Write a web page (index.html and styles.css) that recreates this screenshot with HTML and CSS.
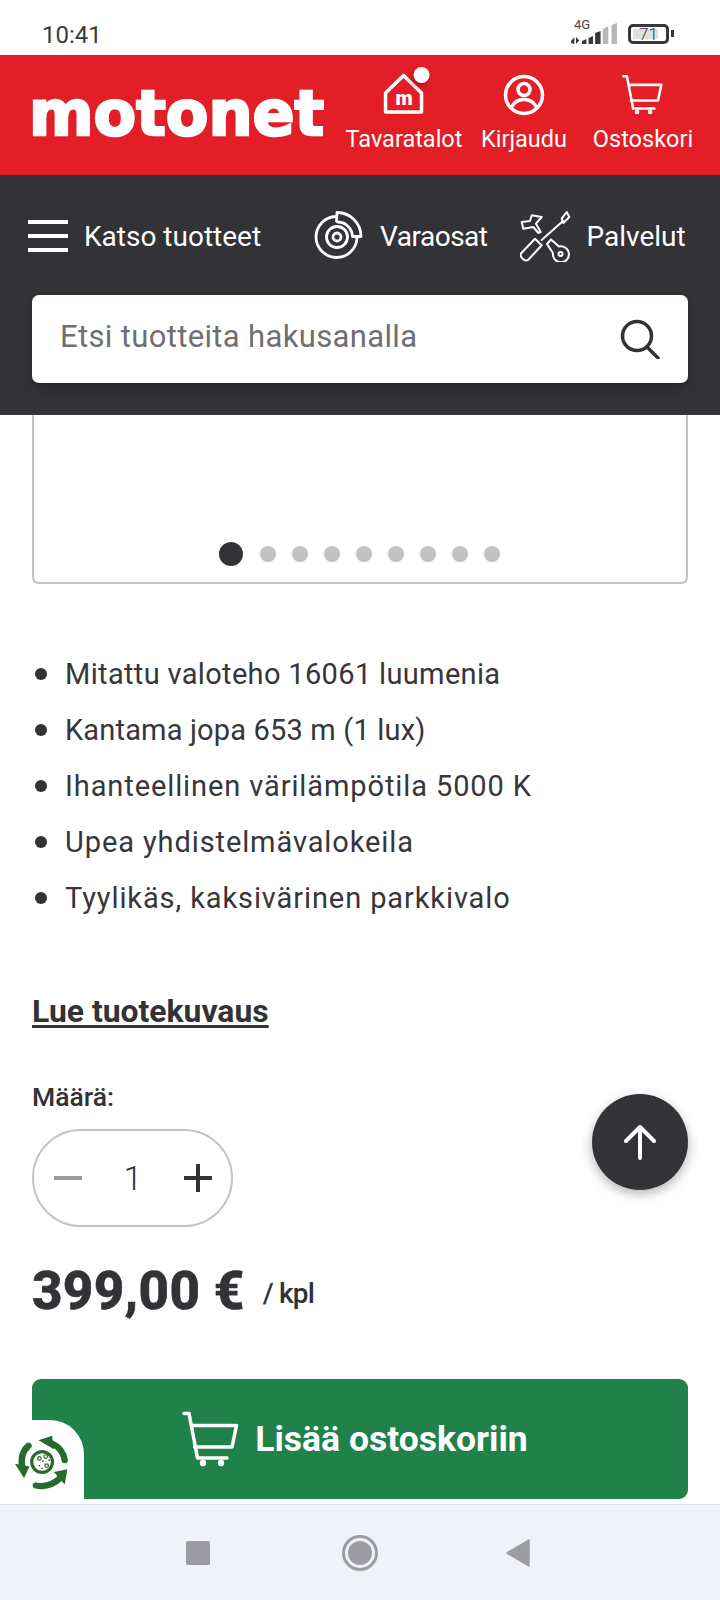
FILE: index.html
```html
<!DOCTYPE html>
<html lang="fi">
<head>
<meta charset="utf-8">
<title>Motonet</title>
<link rel="stylesheet" href="styles.css">
</head>
<body>
<div class="page">
  <div class="status">
    <span class="clock">10:41</span>
    <div class="status-right">
      <div class="signal">
        <span class="net">4G</span>
        <svg class="bars" width="47" height="22" viewBox="0 0 43 22" preserveAspectRatio="none"><path class="b-d" d="M1 18l3-4v7l-3-1zM5.500 14l3 3.500-3 3.500zM11 18l4-2v5h-4zM17 15l4-2v8h-4zM23 10l5-2v13h-5z"/><path class="b-l" d="M30 6l5-3v18h-5zM38 2l5-2v21h-5z"/></svg>
      </div>
      <div class="battery"><span class="batt-fill"></span><span class="batt-num">71</span></div>
      <span class="batt-tip"></span>
    </div>
  </div>

  <header class="top">
    <div class="logo">motonet</div>
    <nav class="top-links">
      <a class="top-link l-store">
        <span class="top-ico">
          <svg width="44" height="44" viewBox="0 0 44 44"><path class="ws" d="M4 20 22 2.500 40 20v19H4z"/></svg>
          <span class="m">m</span>
          <span class="dot"></span>
        </span>
        <span>Tavaratalot</span>
      </a>
      <a class="top-link l-login">
        <span class="top-ico">
          <svg width="44" height="44" viewBox="0 0 44 44"><circle class="ws" cx="22" cy="22" r="18.500"/><circle class="ws" cx="22" cy="16.500" r="6"/><path class="ws" d="M9.500 34c3-5.500 7.500-7.500 12.500-7.500s9.500 2 12.500 7.500"/></svg>
        </span>
        <span>Kirjaudu</span>
      </a>
      <a class="top-link l-cart">
        <span class="top-ico">
          <svg class="cart-small" width="42" height="42" viewBox="0 0 58 57"><use href="#cart"/></svg>
        </span>
        <span>Ostoskori</span>
      </a>
    </nav>
  </header>

  <section class="dark">
    <div class="menu-row">
      <span class="burger"><i></i><i></i><i></i></span>
      <span class="menu-text t1">Katso tuotteet</span>
      <svg class="brake" width="50" height="50" viewBox="0 0 50 50">
        <path class="ws2" d="M23 5.500A20.500 20.500 0 1 0 44 27"/>
        <path class="ws2" d="M24 1.500A24 24 0 0 1 48 25.500H39.500A15 15 0 0 0 25 11l-1.500-1z"/>
        <circle class="ws2" cx="24" cy="26" r="10.500"/>
        <circle class="ws2" cx="24" cy="26" r="4"/>
      </svg>
      <span class="menu-text t2">Varaosat</span>
      <svg class="tools" width="54" height="52" viewBox="0 0 54 52">
        <path class="ws3" d="M1.700 12 10 11l1.700-5.700L21.700 7 16 13.700 20.700 22l-2.400 1-5-6-10 1.700z"/>
        <path class="ws3" d="M41.700 8.700 46.700 2l2.600 5-6 6z"/>
        <path class="ws3" d="M43 11 21.700 30"/>
        <path class="ws3" d="M15 28.700l6.700 6.600L8.300 49.700c-2 1.500-3.600 1-5.300-.7s-3.300-3-2.300-5.300z"/>
        <path class="ws3" d="M31 29.500l8 7a8 8 0 1 1-6 6.500l-6-9z"/>
        <circle class="ws3" cx="40.500" cy="44" r="2"/>
      </svg>
      <span class="menu-text t3">Palvelut</span>
      <span class="menu-cut"></span>
    </div>
    <div class="search">
      <span class="search-text">Etsi tuotteita hakusanalla</span>
      <svg width="40" height="40" viewBox="0 0 40 40"><circle class="ds" cx="17" cy="17" r="14.500"/><path class="ds" d="M27 28l11 11"/></svg>
    </div>
  </section>

  <main class="main">
    <div class="gallery">
      <div class="dots">
        <span class="dot-on"></span>
        <span class="d"></span><span class="d"></span><span class="d"></span><span class="d"></span>
        <span class="d"></span><span class="d"></span><span class="d"></span><span class="d"></span>
      </div>
    </div>
    <ul class="features">
      <li class="f1">Mitattu valoteho 16061 luumenia</li>
      <li class="f2">Kantama jopa 653 m (1 lux)</li>
      <li class="f3">Ihanteellinen värilämpötila 5000 K</li>
      <li class="f3">Upea yhdistelmävalokeila</li>
      <li class="f3">Tyylikäs, kaksivärinen parkkivalo</li>
    </ul>
    <a class="more">Lue tuotekuvaus</a>
    <div class="qty-label">Määrä:</div>
    <div class="stepper">
      <span class="minus"></span>
      <span class="qty">1</span>
      <span class="plus"></span>
    </div>
    <div class="price-row">
      <span class="price">399,00 €</span>
      <span class="unit">/ kpl</span>
    </div>
    <button class="buy">
      <svg class="buy-ico" width="58" height="57" viewBox="0 0 58 57"><use href="#cart"/></svg>
      <span>Lisää ostoskoriin</span>
    </button>
  </main>

  <a class="fab">
    <svg width="36" height="36" viewBox="0 0 36 36"><path class="ws arrow" d="M18 34V3M4 17 18 3l14 14"/></svg>
  </a>

  <div class="eco">
    <svg width="58" height="56" viewBox="0 0 64 62">
      <circle class="eco-ring" cx="31" cy="31" r="11.500"/>
      <circle class="eco-c" cx="28" cy="27" r="2"/><circle class="eco-c" cx="35" cy="25" r="2"/><circle class="eco-c" cx="36" cy="35" r="2"/>
      <circle class="eco-f" cx="28" cy="35" r="1"/><circle class="eco-f" cx="32" cy="30" r="1"/><circle class="eco-f" cx="39" cy="29" r="1"/><circle class="eco-f" cx="31" cy="38" r="1"/>
      <path class="eco-a" d="M56 29C55 21 50 14 41 10"/>
      <path class="eco-h" d="M27 7l15-5 2 15z"/>
      <path class="eco-a" d="M16 13C9 19 7 26 9 37"/>
      <path class="eco-h" d="M1 33l16 3-6 13z"/>
      <path class="eco-a" d="M24 57c10 2 20-1 28-9"/>
      <path class="eco-h" d="M44 42l15-3-3 17z"/>
    </svg>
  </div>

  <div class="sysnav">
    <span class="sys-square"></span>
    <span class="sys-circle"><span></span></span>
    <svg width="24" height="28" viewBox="0 0 24 28"><path class="tri" d="M23 1v26L1 14z"/></svg>
  </div>
</div>

<svg class="defs" width="0" height="0">
  <symbol id="cart" viewBox="0 0 58 57">
    <path class="cart-s" d="M2 2.500h5l8.500 44.500H45M10 14.500h44.500L50 36H12.500"/>
    <circle class="cart-w" cx="21" cy="52" r="3.200"/>
    <circle class="cart-w" cx="39" cy="52" r="3.200"/>
  </symbol>
</svg>
</body>
</html>
```

FILE: styles.css
```css
* { box-sizing: border-box; }
html, body { margin: 0; padding: 0; background: #fff; }
body { font-family: Roboto, "Liberation Sans", sans-serif; color: #323237; }
.page { position: relative; width: 720px; height: 1600px; overflow: hidden; display: flex; flex-direction: column; }
.defs { position: absolute; }

.status { height: 55px; display: flex; align-items: center; justify-content: space-between; padding: 14px 46px 0 42px; background: #fff; }
.clock { font-size: 24px; color: #3a3a3c; }
.status-right { display: flex; align-items: center; margin-top: -2px; }
.signal { position: relative; width: 47px; height: 22px; margin-right: 11px; }
.net { position: absolute; left: 4px; top: -5px; font-size: 13px; line-height: 14px; color: #444; }
.bars { position: absolute; left: 0; top: 0; }
.b-d { fill: #38383a; }
.b-l { fill: #b8b8ba; }
.battery { position: relative; width: 41px; height: 20px; border: 3px solid #38383a; border-radius: 5px; display: flex; align-items: center; justify-content: center; }
.batt-fill { position: absolute; left: 2px; top: 2px; bottom: 2px; width: 25px; background: #e0e0e0; }
.batt-num { position: relative; font-size: 17px; font-weight: 300; color: #333; }
.batt-tip { width: 3px; height: 7px; background: #38383a; margin-left: 2px; }

.top { height: 120px; background: #e31e26; display: flex; color: #fff; position: relative; }
.logo { font-family: "DejaVu Sans", sans-serif; font-weight: 700; font-size: 62px; letter-spacing: 0; line-height: 60px; margin: 29px 0 0 29px; -webkit-text-stroke: 2.500px #fff; }
.top-links { position: absolute; inset: 0; }
.top-link { position: absolute; top: 18px; display: flex; flex-direction: column; align-items: center; font-size: 23.500px; line-height: 28px; white-space: nowrap; transform: translateX(-50%); }
.l-store { left: 404px; }
.l-login { left: 524px; }
.l-cart { left: 643px; }
.top-ico { position: relative; width: 44px; height: 44px; margin-bottom: 8px; display: flex; justify-content: center; }
.top-ico svg { display: block; }
.cart-small { margin-top: 1px; }
.ws { fill: none; stroke: #fff; stroke-width: 3.500px; stroke-linejoin: round; stroke-linecap: round; }
.arrow { stroke-width: 4px; }
.m { position: absolute; left: 0; right: 0; top: 15px; text-align: center; font-size: 20px; font-weight: 900; line-height: 20px; }
.dot { position: absolute; left: 32px; top: -6px; width: 16px; height: 16px; border-radius: 50%; background: #fff; box-shadow: -2px 4px 6px rgba(110, 0, 0, .45); }
.cart-s { fill: none; stroke: #fff; stroke-width: 3.500px; stroke-linejoin: round; stroke-linecap: round; }
.cart-w { fill: #fff; }

.dark { height: 240px; background: #323237; padding-top: 33px; }
.menu-row { display: flex; align-items: center; height: 56px; padding-left: 28px; color: #fff; white-space: nowrap; }
.burger { display: flex; flex-direction: column; justify-content: space-between; width: 40px; height: 32px; flex: none; }
.burger i { display: block; height: 4px; background: #fff; }
.menu-text { font-size: 28px; }
.t1 { margin-left: 16px; }
.brake { flex: none; margin-left: 52px; }
.t2 { margin-left: 17px; letter-spacing: -.5px; }
.tools { flex: none; margin-left: 32px; }
.t3 { margin-left: 13px; }
.menu-cut { width: 14px; height: 20px; flex: none; margin-left: 34px; border: 3px solid #fff; border-radius: 50%; }
.ws2 { fill: none; stroke: #fff; stroke-width: 2.800px; stroke-linejoin: round; }
.ws3 { fill: none; stroke: #fff; stroke-width: 2px; stroke-linejoin: round; stroke-linecap: round; }
.search { margin: 31px 32px 0; height: 88px; background: #fff; border-radius: 7px; display: flex; align-items: center; justify-content: space-between; padding: 0 28px 0 28px; box-shadow: 0 4px 10px rgba(0, 0, 0, .25); }
.search-text { font-size: 31px; letter-spacing: .35px; color: #6f6f72; margin-top: -6px; }
.ds { fill: none; stroke: #323237; stroke-width: 3.500px; stroke-linecap: round; }

.main { flex: 1; padding: 0 32px; }
.gallery { height: 169px; border: 2px solid #c4c4c4; border-top: 0; border-radius: 0 0 7px 7px; display: flex; align-items: flex-end; justify-content: center; padding-bottom: 16px; }
.dots { display: flex; align-items: center; gap: 16px; margin-right: 1px; }
.dot-on { width: 24px; height: 24px; border-radius: 50%; background: #323237; margin-right: 1px; }
.d { width: 16px; height: 16px; border-radius: 50%; background: #c2c2c2; }
.features { margin: 62px 0 0; padding: 0 0 0 33px; list-style: none; font-size: 29px; line-height: 56px; color: #36363b; }
.features li { position: relative; white-space: nowrap; }
.features li::before { content: ""; position: absolute; left: -30px; top: 22px; width: 12px; height: 12px; border-radius: 50%; background: #323237; }
.f1 { letter-spacing: .34px; }
.f2 { letter-spacing: .17px; }
.f3 { letter-spacing: .9px; }
.more { display: block; margin-top: 65px; font-size: 31.900px; font-weight: 700; line-height: 40px; text-decoration: underline; text-decoration-thickness: 3px; text-underline-offset: 3px; }
.qty-label { margin-top: 48px; font-size: 26.500px; font-weight: 500; line-height: 36px; }
.stepper { position: relative; margin-top: 14px; width: 201px; height: 98px; border: 2px solid #c4c4c4; border-radius: 49px; display: flex; align-items: center; justify-content: space-between; padding: 0 19px 0 20px; }
.minus { width: 28px; height: 4px; background: #9a9a9a; }
.qty { font-size: 34px; font-weight: 300; }
.plus { position: relative; width: 28px; height: 28px; }
.plus::before, .plus::after { content: ""; position: absolute; background: #323237; }
.plus::before { left: 0; right: 0; top: 12px; height: 4px; }
.plus::after { top: 0; bottom: 0; left: 12px; width: 4px; }
.price-row { display: flex; align-items: center; margin-top: 27px; line-height: 68px; }
.price { font-size: 53px; font-weight: 800; letter-spacing: .3px; -webkit-text-stroke: .6px #323237; }
.unit { margin-left: 18px; font-size: 28px; letter-spacing: -.8px; font-weight: 500; margin-top: 6px; }
.buy { display: flex; align-items: center; justify-content: center; gap: 15px; width: 656px; height: 120px; margin-top: 51px; border: 0; border-radius: 9px; background: #20814a; color: #fff; font-family: Roboto, sans-serif; font-size: 35.500px; font-weight: 700; padding: 0 10px 0 0; }
.buy-ico { flex: none; }

.fab { position: absolute; left: 592px; top: 1094px; width: 96px; height: 96px; border-radius: 50%; background: #323237; display: flex; align-items: center; justify-content: center; box-shadow: 0 4px 12px rgba(0, 0, 0, .3); }
.eco { position: absolute; left: 0; top: 1420px; width: 84px; height: 84px; background: #fff; border-radius: 0 34px 0 0; padding: 14px 0 0 14px; }
.eco svg { display: block; }
.eco-ring { fill: none; stroke: #286a2e; stroke-width: 3.500px; }
.eco-c { fill: none; stroke: #286a2e; stroke-width: 1.300px; }
.eco-f { fill: #286a2e; }
.eco-a { fill: none; stroke: #286a2e; stroke-width: 7px; stroke-linecap: round; }
.eco-h { fill: #286a2e; }

.sysnav { position: absolute; left: 0; right: 0; bottom: 0; height: 96px; background: #eff2f7; border-top: 1px solid #dfe2e8; display: flex; align-items: center; justify-content: center; padding-right: 5px; }
.sys-square { width: 24px; height: 24px; border-radius: 2px; background: #9c9ca2; margin-right: 132px; }
.sys-circle { width: 36px; height: 36px; border-radius: 50%; border: 3px solid #9c9ca2; padding: 3px; margin-right: 128px; }
.sys-circle span { display: block; width: 100%; height: 100%; border-radius: 50%; background: #9c9ca2; }
.tri { fill: #9c9ca2; stroke: #9c9ca2; stroke-width: 1.500px; stroke-linejoin: round; }
```
